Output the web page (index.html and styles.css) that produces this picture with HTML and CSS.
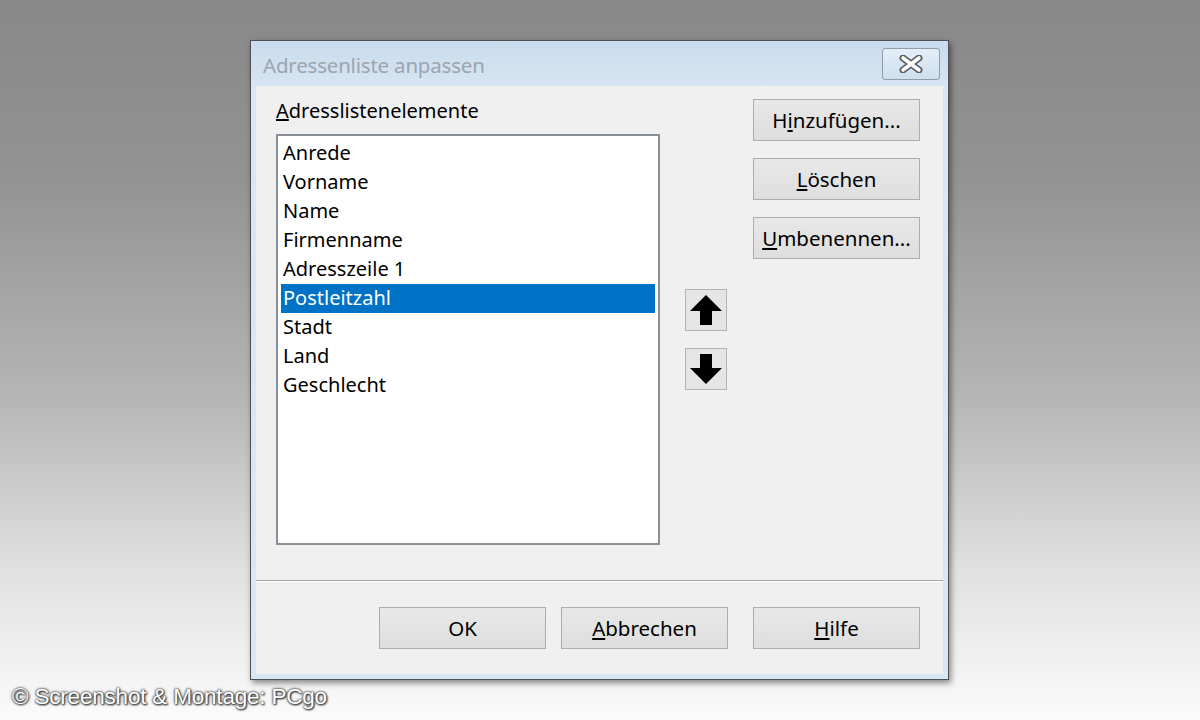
FILE: index.html
```html
<!DOCTYPE html>
<html lang="de">

<head>
    <meta charset="UTF-8">
    <meta name="viewport" content="width=device-width, initial-scale=1.0">
    <title>Adressenliste anpassen</title>
    <link rel="stylesheet" href="styles.css">
</head>

<body>
    <div class="dialog">
        <div class="titlebar">
            <span class="title">Adressenliste anpassen</span>
            <button class="close" type="button" aria-label="Schließen">
                <svg width="26" height="18" viewBox="0 0 26 18">
                    <path d="M5 3 L21 15 M21 3 L5 15" stroke="#5a5e63" stroke-width="7" stroke-linecap="round" />
                    <path d="M5 3 L21 15 M21 3 L5 15" stroke="#ffffff" stroke-width="3.6" stroke-linecap="round" />
                </svg>
            </button>
        </div>

        <div class="content">
            <div class="main">
                <div class="list-col">
                    <label class="list-label" for="fields"><u>A</u>dresslistenelemente</label>
                    <ul class="listbox" id="fields">
                        <li>Anrede</li>
                        <li>Vorname</li>
                        <li>Name</li>
                        <li>Firmenname</li>
                        <li>Adresszeile 1</li>
                        <li class="selected">Postleitzahl</li>
                        <li>Stadt</li>
                        <li>Land</li>
                        <li>Geschlecht</li>
                    </ul>
                </div>

                <div class="arrow-col">
                    <button class="arrow" type="button" aria-label="Nach oben">
                        <svg width="34" height="32" viewBox="0 0 34 32">
                            <path d="M17 1 L33 17 L23 17 L23 31 L11 31 L11 17 L1 17 Z" fill="#000" />
                        </svg>
                    </button>
                    <button class="arrow" type="button" aria-label="Nach unten">
                        <svg width="34" height="32" viewBox="0 0 34 32">
                            <path d="M17 31 L33 15 L23 15 L23 1 L11 1 L11 15 L1 15 Z" fill="#000" />
                        </svg>
                    </button>
                </div>

                <div class="side-col">
                    <button class="btn" type="button">H<u>i</u>nzufügen...</button>
                    <button class="btn" type="button"><u>L</u>öschen</button>
                    <button class="btn" type="button"><u>U</u>mbenennen...</button>
                </div>
            </div>

            <div class="separator"></div>

            <div class="footer">
                <button class="btn" type="button">OK</button>
                <button class="btn" type="button"><u>A</u>bbrechen</button>
                <button class="btn help" type="button"><u>H</u>ilfe</button>
            </div>
        </div>
    </div>

    <p class="credit">© Screenshot &amp; Montage: PCgo</p>
</body>

</html>
```

FILE: styles.css
```css
body {
    margin: 0;
    padding: 40px 0 0 0;
    width: 1200px;
    height: 720px;
    box-sizing: border-box;
    overflow: hidden;
    font-family: "Noto Sans", "Open Sans", sans-serif;
    background: linear-gradient(#888888 0%, #939393 25%, #b5b5b5 55%, #e2e2e2 80%, #fbfbfb 100%);
}

.dialog {
    margin-left: 250px;
    width: 699px;
    height: 640px;
    box-sizing: border-box;
    border: 1px solid #4d4f52;
    background-color: #d9e6f3;
    padding: 0 5px 5px 5px;
    display: flex;
    flex-direction: column;
    box-shadow: 2px 3px 6px rgba(0, 0, 0, 0.45);
}

.titlebar {
    height: 45px;
    flex: none;
    display: flex;
    align-items: flex-start;
    justify-content: space-between;
    background: linear-gradient(#c9dbec, #d7e5f3);
    margin: 0 -5px;
    padding: 0 8px 0 12px;
}

.title {
    margin-top: 10px;
    font-size: 20.5px;
    color: #9ba5af;
    letter-spacing: -0.2px;
}

.close {
    margin-top: 7px;
    width: 58px;
    height: 32px;
    border: 1px solid #8e9cab;
    border-radius: 3px;
    background: linear-gradient(#e4eef8, #cedfef);
    display: flex;
    align-items: center;
    justify-content: center;
    padding: 0;
}

.content {
    flex: 1;
    background-color: #f0f0f0;
    display: flex;
    flex-direction: column;
}

.main {
    flex: 1;
    display: flex;
    padding: 13px 22px 0 20px;
}

.list-col {
    display: flex;
    flex-direction: column;
}

.list-label {
    height: 35px;
    font-size: 20px;
    color: #000;
    line-height: 24px;
}

.listbox {
    list-style: none;
    margin: 0;
    padding: 3px;
    width: 384px;
    height: 411px;
    box-sizing: border-box;
    background-color: #ffffff;
    border: 2px solid #8a9098;
}

.listbox li {
    height: 29px;
    line-height: 28px;
    padding-left: 2px;
    font-size: 20px;
    color: #000;
}

.listbox li.selected {
    background-color: #0072c6;
    color: #ffffff;
}

.arrow-col {
    display: flex;
    flex-direction: column;
    gap: 17px;
    margin: 190px 0 0 25px;
}

.arrow {
    width: 42px;
    height: 42px;
    padding: 0;
    border: 1px solid #b3b3b3;
    background-color: #e5e5e5;
    display: flex;
    align-items: center;
    justify-content: center;
}

.side-col {
    display: flex;
    flex-direction: column;
    gap: 17px;
    margin-left: 26px;
}

.btn {
    width: 167px;
    height: 42px;
    padding: 0;
    border: 1px solid #adadad;
    background: linear-gradient(#e8e8e8, #dedede);
    font-family: "Noto Sans", "Open Sans", sans-serif;
    font-size: 20.5px;
    color: #000;
}

.separator {
    height: 1px;
    background-color: #a0a0a0;
    border-bottom: 1px solid #ffffff;
}

.footer {
    display: flex;
    justify-content: flex-end;
    gap: 15px;
    padding: 25px 23px 25px 0;
}

.footer .help {
    margin-left: 10px;
}

.credit {
    margin: 4px 0 0 12px;
    font-family: "Liberation Sans", Arial, sans-serif;
    font-size: 22.5px;
    color: #ffffff;
    letter-spacing: -0.2px;
    text-shadow: 0 0 2px #333, 0 0 3px #444, 1px 1px 2px #222;
}
```
